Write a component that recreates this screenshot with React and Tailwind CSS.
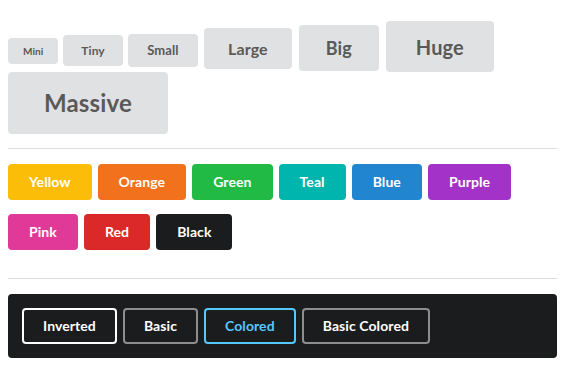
export default function App() {
  const sizes = [
    { label: "Mini", cls: "text-[10px] mr-[5px]" },
    { label: "Tiny", cls: "text-[12px] mr-[5px]" },
    { label: "Small", cls: "text-[13px] mr-[6px]" },
    { label: "Large", cls: "text-[16px] mr-[7px]" },
    { label: "Big", cls: "text-[18px] mr-[7px]" },
    { label: "Huge", cls: "text-[20px] mr-[7px]" },
    { label: "Massive", cls: "text-[24px] mr-[7px]" },
  ];

  const colors = [
    { label: "Yellow", cls: "bg-[#fbbd08]" },
    { label: "Orange", cls: "bg-[#f2711c]" },
    { label: "Green", cls: "bg-[#21ba45]" },
    { label: "Teal", cls: "bg-[#00b5ad]" },
    { label: "Blue", cls: "bg-[#2185d0]" },
    { label: "Purple", cls: "bg-[#a333c8]" },
    { label: "Pink", cls: "bg-[#e03997]" },
    { label: "Red", cls: "bg-[#db2828]" },
    { label: "Black", cls: "bg-[#1b1c1d]" },
  ];

  const base = "leading-[1em] py-[0.7857em] px-[1.5em] rounded-[4px] font-bold tracking-[0.006em]";

  return (
    <div className="bg-white min-h-[370px] pl-[8px] pr-[10px] pt-[21px] font-['Lato',sans-serif] text-[14px]">
      {/* sizes */}
      <div className="flex flex-wrap items-baseline">
        {sizes.map((s) => (
          <button key={s.label} className={`${base} ${s.cls} bg-[#e0e1e2] text-[#595959]`}>
            {s.label}
          </button>
        ))}
      </div>

      <div className="mt-[14px] border-t border-[#dededf]" />

      {/* colors */}
      <div className="mt-[15px] flex flex-wrap gap-x-[6px] gap-y-[14px] w-[520px]">
        {colors.map((c) => (
          <button key={c.label} className={`${base} ${c.cls} text-white`}>
            {c.label}
          </button>
        ))}
      </div>

      <div className="mt-[28px] border-t border-[#dededf]" />

      {/* inverted */}
      <div className="mt-[15px] bg-[#1b1c1d] rounded-[4px] p-[14px] flex gap-x-[6px]">
        <button className={`${base} text-white shadow-[inset_0_0_0_2px_#ffffff]`}>Inverted</button>
        <button className={`${base} text-white shadow-[inset_0_0_0_2px_rgba(255,255,255,0.5)]`}>Basic</button>
        <button className={`${base} text-[#54c8ff] shadow-[inset_0_0_0_2px_#54c8ff]`}>Colored</button>
        <button className={`${base} text-white shadow-[inset_0_0_0_2px_rgba(255,255,255,0.5)]`}>Basic Colored</button>
      </div>
    </div>
  );
}
